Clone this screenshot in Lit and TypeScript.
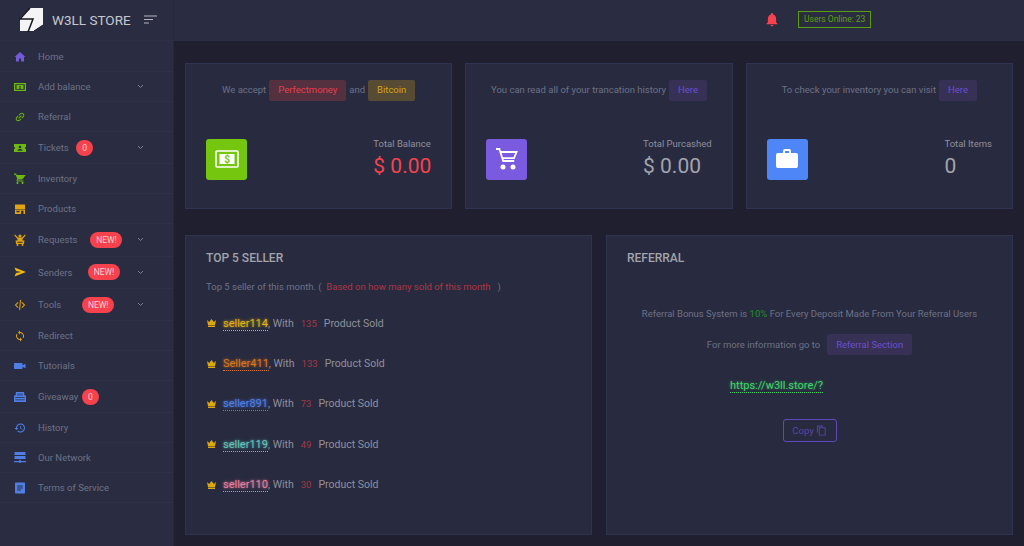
import { LitElement, html, css, svg } from 'lit';
import { customElement } from 'lit/decorators.js';

const GREEN = '#6cb80f';
const ORANGE = '#e0a40e';
const BLUE = '#4f7fe6';
const PURPLE = '#7459d9';

const ICONS: Record<string, any> = {
  home: svg`<path d="M10 21v-6h4v6h6v-9h3L12 2 1 12h3v9z"/>`,
  money: svg`<path fill-rule="evenodd" d="M0 4h24v16H0zM2.5 6.5v11h19v-11z"/><rect x="5" y="8" width="14" height="8"/><text x="12" y="15" font-size="8" font-weight="700" text-anchor="middle" fill="#2a2d41" font-family="Roboto">$</text>`,
  link: svg`<g transform="rotate(-45 12 12)"><path d="M3.9 12c0-1.71 1.39-3.1 3.1-3.1h4V7H7c-2.76 0-5 2.24-5 5s2.24 5 5 5h4v-1.9H7c-1.71 0-3.1-1.39-3.1-3.1zM8 13h8v-2H8v2zm9-6h-4v1.9h4c1.71 0 3.1 1.39 3.1 3.1s-1.39 3.1-3.1 3.1h-4V17h4c2.76 0 5-2.24 5-5s-2.24-5-5-5z"/></g>`,
  ticket: svg`<path d="M0 4h24v6a2 2 0 0 0 0 4v6H0v-6a2 2 0 0 0 0-4z"/><circle cx="12" cy="10" r="2.6" fill="#2a2d41"/><path d="M7 17.5c0-2.6 2.6-3.6 5-3.6s5 1 5 3.6z" fill="#2a2d41"/>`,
  cart: svg`<path d="M7 18c-1.1 0-1.99.9-1.99 2S5.9 22 7 22s2-.9 2-2-.9-2-2-2zM0 1v2.5h3l3.6 8.1-1.35 2.45c-.16.28-.25.61-.25.96 0 1.1.9 2 2 2h12v-2H7.42c-.14 0-.25-.11-.25-.25l.03-.12.9-1.83h7.45c.75 0 1.41-.41 1.75-1.03L23.5 4H5.21l-.94-3H0zm17 17c-1.1 0-1.99.9-1.99 2s.89 2 1.99 2 2-.9 2-2-.9-2-2-2z"/>`,
  store: svg`<path fill-rule="evenodd" d="M2 3h20v9H2zM2 13h20v9H2zM5 15.5v3h6v-3zM14 15.5v6.5h5v-6.5z"/>`,
  request: svg`<circle cx="12" cy="4" r="3"/><path d="M2 1l6 6h8l6-6 1.6 1.6L17 10v3H7v-3L.4 2.6zM3 13h18l-1.2 7H4.200zM6.500 15.500l.4 2h10.200l.4-2z" fill-rule="evenodd"/><circle cx="7" cy="22" r="2"/><circle cx="17" cy="22" r="2"/>`,
  send: svg`<path d="M1 3l23 9-23 9 3-7 10-2-10-2z"/>`,
  code: svg`<path d="M7.500 18L1.500 12l6-6 1.500 1.500L4.500 12 9 16.500zM16.500 18l6-6-6-6L15 7.500l4.500 4.500L15 16.500zM10.200 22l2 .4L14 2l-2-.4z"/>`,
  sync: svg`<path d="M12 4V1L8 5l4 4V6c3.31 0 6 2.69 6 6 0 1.01-.25 1.970-.7 2.8l1.460 1.460C19.540 15.030 20 13.570 20 12c0-4.420-3.580-8-8-8zm0 14c-3.310 0-6-2.690-6-6 0-1.010.25-1.970.7-2.8L5.240 7.740C4.460 8.970 4 10.430 4 12c0 4.420 3.580 8 8 8v3l4-4-4-4v3z"/>`,
  video: svg`<path d="M17 10.500V7c0-.55-.45-1-1-1H1c-.55 0-1 .45-1 1v10c0 .55.45 1 1 1h15c.55 0 1-.45 1-1v-3.500l6 3v-9z"/>`,
  gift: svg`<path fill-rule="evenodd" d="M4 2h16l1 7h3v13H0V9h3zM7 5v4h2V5zM11 5v4h2V5zM15 5v4h2V5zM2.500 12.500v1.500h19v-1.500zM2.500 17v1.500h19V17z"/>`,
  history: svg`<path d="M13 3c-4.970 0-9 4.030-9 9H1l3.890 3.890.07.14L9 12H6c0-3.870 3.130-7 7-7s7 3.130 7 7-3.130 7-7 7c-1.930 0-3.680-.79-4.940-2.060l-1.420 1.420C8.270 19.990 10.510 21 13 21c4.970 0 9-4.030 9-9s-4.030-9-9-9zm-1 5v5l4.280 2.540.72-1.210-3.500-2.080V8H12z"/>`,
  network: svg`<path fill-rule="evenodd" d="M1 0h22v6H1zM1 8h22v6H1zM10.500 15.500h3V18H24v2.500H14a2.200 2.200 0 0 1-4 0H0V18h10.500z"/>`,
  terms: svg`<path d="M20 1H4C2.900 1 2 1.900 2 3v18c0 1.100.9 2 2 2h16c1.100 0 2-.9 2-2V3c0-1.100-.9-2-2-2zm-6 16H6.500v-2H14v2zm3.500-4h-11v-2h11v2zm0-4h-11V7h11v2z"/>`,
};

const NAV = [
  { label: 'Home', icon: 'home', color: PURPLE },
  { label: 'Add balance', icon: 'money', color: GREEN, caret: true },
  { label: 'Referral', icon: 'link', color: GREEN },
  { label: 'Tickets', icon: 'ticket', color: GREEN, badge: '0', gap: 7.5, caret: true },
  { label: 'Inventory', icon: 'cart', color: GREEN },
  { label: 'Products', icon: 'store', color: ORANGE },
  { label: 'Requests', icon: 'request', color: ORANGE, badge: 'NEW!', gap: 13, caret: true },
  { label: 'Senders', icon: 'send', color: '#f0b90b', badge: 'NEW!', gap: 15.5, caret: true },
  { label: 'Tools', icon: 'code', color: ORANGE, badge: 'NEW!', gap: 21, caret: true },
  { label: 'Redirect', icon: 'sync', color: ORANGE },
  { label: 'Tutorials', icon: 'video', color: BLUE },
  { label: 'Giveaway', icon: 'gift', color: BLUE, badge: '0', gap: 3.5 },
  { label: 'History', icon: 'history', color: BLUE },
  { label: 'Our Network', icon: 'network', color: BLUE },
  { label: 'Terms of Service', icon: 'terms', color: BLUE },
];

const SELLERS = [
  { name: 'seller114', color: '#e0b015', sold: 135 },
  { name: 'Seller411', color: '#d9761c', sold: 133 },
  { name: 'seller891', color: '#4f7fe6', sold: 73 },
  { name: 'seller119', color: '#66c2b8', sold: 49 },
  { name: 'seller110', color: '#e87f9c', sold: 30 },
];

@customElement('app-root')
export class AppRoot extends LitElement {
  static styles = css`
    :host {
      display: grid;
      grid-template-columns: 174px 1fr;
      grid-template-rows: 41px 1fr;
      height: 100vh;
      overflow: hidden;
      background: #1f1f2f;
      color: #6d7186;
      font-family: Roboto, "Liberation Sans", sans-serif;
      font-size: 9.5px;
    }

    svg { display: block; fill: currentColor; }

    .brand {
      display: flex;
      align-items: center;
      background: #2a2d41;
      padding-left: 19px;
      border-right: 1px solid #26283a;
      border-bottom: 1px solid #2b2e45;
    }
    .brand .title {
      margin-left: 8px;
      color: #c6c8d0;
      font-size: 13.5px;
      white-space: nowrap;
    }
    .brand .toggle { margin-left: 13px; color: #b4b6c0; }

    .topbar {
      display: flex;
      align-items: center;
      background: #2a2d41;
      padding: 0 0 3px 591px;
    }
    .topbar .bell { color: #f5424c; }
    .online {
      margin-left: 19px;
      border: 1px solid #5a9e10;
      color: #5f9e12;
      font-size: 8.5px;
      line-height: 15px;
      padding: 0 5px;
      white-space: nowrap;
    }

    .sidebar {
      background: #2a2d41;
      border-right: 1px solid #26283a;
      padding-top: 1px;
    }
    .nav-row {
      display: flex;
      align-items: center;
      height: 30px;
      box-sizing: border-box;
      padding: 0 29px 0 14px;
      border-bottom: 1px solid #2e3048;
      font-size: 9.5px;
      color: #6d7186;
      white-space: nowrap;
    }
    .nav-row.tall { height: 32.3px; }
    .nav-row .nav-icon { width: 12px; height: 12px; margin-right: 12px; flex: none; }
    .caret { margin-left: auto; color: #7c8093; }
    .badge {
      background: #f5424c;
      color: #f6d5d8;
      font-size: 8.5px;
      line-height: 16px;
      height: 16px;
      border-radius: 8px;
      padding: 0 6px;
      text-align: center;
    }
    .badge.round { width: 17px; padding: 0; }
    .badge.wide { width: 32px; padding: 0; }

    main {
      padding: 22px 11px 0;
      min-width: 0;
    }
    .stats {
      display: grid;
      grid-template-columns: repeat(3, 1fr);
      gap: 13px;
    }
    .card {
      background: #282b3f;
      border: 1px solid #2f3350;
      box-sizing: border-box;
    }
    .stat {
      height: 146px;
      padding: 16px 20px 0;
    }
    .stat .note {
      display: flex;
      justify-content: center;
      align-items: flex-start;
      gap: 3px;
      height: 21px;
      line-height: 19px;
      white-space: nowrap;
    }
    .pill {
      display: inline-block;
      border-radius: 2px;
      line-height: 19px;
      padding: 0 9px 2px;
    }
    .pill.red { background: #55303f; color: #e2404d; }
    .pill.yellow { background: #574b33; color: #d5a415; }
    .pill.violet { background: #373156; color: #6a4fd0; }
    .stat .body {
      display: flex;
      justify-content: space-between;
      align-items: center;
      margin-top: 37px;
    }
    .tile {
      width: 41px;
      height: 41px;
      border-radius: 3px;
      display: flex;
      align-items: center;
      justify-content: center;
      color: #fff;
    }
    .tile.green { background: #74c60e; }
    .tile.purple { background: #7a5bdf; }
    .tile.blue { background: #4f86f7; }
    .stat .figures { padding-bottom: 2px; }
    .stat .caption { font-size: 9.5px; color: #8d8f9d; }
    .stat .value {
      font-size: 21px;
      line-height: 24px;
      margin-top: 5px;
      color: #a3a4ac;
    }
    .stat .value.red { color: #f5424c; }

    .panels {
      display: grid;
      grid-template-columns: repeat(2, 1fr);
      gap: 14px;
      margin-top: 26px;
    }
    .panel {
      height: 300px;
      padding: 15px 20px;
    }
    h3 {
      margin: 0;
      font-size: 12px;
      line-height: 14px;
      font-weight: 500;
      color: #a2a3ab;
    }
    .sub { margin-top: 15px; line-height: 14px; white-space: pre; }
    .sub .alert { color: #b03543; }
    .sellers { margin-top: 9px; }
    .seller {
      display: flex;
      align-items: center;
      height: 40.4px;
      font-size: 10.5px;
      color: #8f909c;
    }
    .seller .crown { color: #dba90f; margin: 0 7px 0 1px; flex: none; }
    .seller .text { white-space: pre; }
    .seller .name {
      font-size: 11px;
      border-bottom: 1px dotted currentColor;
    }
    .seller .sold { color: #a23845; font-size: 9.5px; margin: 0 7px; }

    .referral { text-align: center; }
    .referral h3 { text-align: left; }
    .referral .line { margin-top: 42px; line-height: 14px; }
    .referral .line b { color: #1f7f2a; font-weight: 500; }
    .more {
      display: flex;
      justify-content: center;
      align-items: center;
      gap: 7px;
      margin-top: 13px;
    }
    .more .pill { line-height: 21px; padding: 0 9px; }
    .url {
      display: inline-block;
      margin-top: 25px;
      padding-right: 66px;
      color: #3fd468;
      font-size: 11px;
      line-height: 12px;
      text-shadow: 0 0 3px rgba(63, 212, 104, 0.6);
    }
    .url span { border-bottom: 1px dotted currentColor; }
    .copy-wrap { margin-top: 27px; }
    .copy {
      display: inline-flex;
      align-items: center;
      justify-content: center;
      gap: 2px;
      box-sizing: border-box;
      height: 23px;
      width: 54px;
      border: 1px solid #5f49b8;
      border-radius: 3px;
      color: #5a45a8;
      background: none;
      font: inherit;
    }
  `;

  navRow(item: any) {
    const badgeClass = item.badge === '0' ? 'round' : 'wide';
    return html`
      <div class="nav-row ${item.badge ? 'tall' : ''}">
        <svg class="nav-icon" viewBox="0 0 24 24" style="color: ${item.color}">${ICONS[item.icon]}</svg>
        <span>${item.label}</span>
        ${item.badge
          ? html`<span class="badge ${badgeClass}" style="margin-left: ${item.gap}px">${item.badge}</span>`
          : ''}
        ${item.caret
          ? html`<svg class="caret" width="7" height="5" viewBox="0 0 7 5"><path d="M1 1l2.500 2.500L6 1" fill="none" stroke="currentColor"/></svg>`
          : ''}
      </div>
    `;
  }

  statCard(note: any, tile: string, icon: any, caption: string, value: string, valueClass = '') {
    return html`
      <section class="card stat">
        <div class="note">${note}</div>
        <div class="body">
          <div class="tile ${tile}">${icon}</div>
          <div class="figures">
            <div class="caption">${caption}</div>
            <div class="value ${valueClass}">${value}</div>
          </div>
        </div>
      </section>
    `;
  }

  render() {
    const moneyIcon = html`<svg width="24" height="20" viewBox="0 0 24 20" style="fill:none;stroke:#fff;stroke-width:1.6"><rect x="1" y="2" width="22" height="16" rx="1"/><rect x="4.500" y="5" width="15" height="10" fill="#fff" stroke="none"/><text x="12" y="14" font-size="10" font-weight="700" text-anchor="middle" fill="#74c60e" stroke="none" font-family="Roboto">$</text></svg>`;
    const cartIcon = html`<svg width="24" height="24" viewBox="0 0 24 24" style="fill:none;stroke:#fff;stroke-width:1.8"><path d="M1 2h3.400l3.800 12h11"/><path d="M5.200 5h16.400l-2.600 6.200H7.200"/><circle cx="8" cy="20" r="1.600" fill="#fff"/><circle cx="18" cy="20" r="1.600" fill="#fff"/></svg>`;
    const bagIcon = html`<svg width="24" height="22" viewBox="0 0 24 22"><path fill-rule="evenodd" d="M8 5V3a2 2 0 0 1 2-2h4a2 2 0 0 1 2 2v2h5a2 2 0 0 1 2 2v11a2 2 0 0 1-2 2H3a2 2 0 0 1-2-2V7a2 2 0 0 1 2-2zM10 3v2h4V3z"/></svg>`;

    return html`
      <header class="brand">
        <svg width="25" height="27" viewBox="0 0 25 27">
          <rect x="1" y="1" width="23" height="23" fill="#f4f4f4"/>
          <path d="M1 1h10L1 11z" fill="#2a2d41"/>
          <path d="M11 1L1 12h13L9 25" fill="none" stroke="#16161f" stroke-width="1.500"/>
          <path d="M15 24l9-6v6z" fill="#2a2d41"/>
          <path d="M15 24l9-6" fill="none" stroke="#16161f" stroke-width="1"/>
        </svg>
        <span class="title">W3LL STORE</span>
        <svg class="toggle" width="13" height="10" viewBox="0 0 13 10"><path d="M0 1h13M0 4.500h9M0 8h5" fill="none" stroke="currentColor" stroke-width="1.200"/></svg>
      </header>
      <div class="topbar">
        <svg class="bell" width="14" height="15" viewBox="2 1 20 22"><path d="M12 22c1.100 0 2-.9 2-2h-4c0 1.100.89 2 2 2zm6-6v-5c0-3.070-1.640-5.640-4.500-6.320V4c0-.83-.67-1.500-1.500-1.500s-1.500.67-1.500 1.500v.68C7.630 5.360 6 7.920 6 11v5l-2 2v1h16v-1l-2-2z"/></svg>
        <div class="online">Users Online: 23</div>
      </div>
      <nav class="sidebar">${NAV.map(item => this.navRow(item))}</nav>
      <main>
        <div class="stats">
          ${this.statCard(
            html`We accept<span class="pill red">Perfectmoney</span>and<span class="pill yellow">Bitcoin</span>`,
            'green', moneyIcon, 'Total Balance', '$ 0.00', 'red')}
          ${this.statCard(
            html`You can read all of your trancation history<span class="pill violet">Here</span>`,
            'purple', cartIcon, 'Total Purcashed', '$ 0.00')}
          ${this.statCard(
            html`To check your inventory you can visit<span class="pill violet">Here</span>`,
            'blue', bagIcon, 'Total Items', '0')}
        </div>
        <div class="panels">
          <section class="card panel">
            <h3>TOP 5 SELLER</h3>
            <div class="sub">Top 5 seller of this month. (  <span class="alert">Based on how many sold of this month</span>   )</div>
            <div class="sellers">
              ${SELLERS.map(s => html`
                <div class="seller">
                  <svg class="crown" width="9" height="8" viewBox="0 0 9 8"><path d="M0 1l2.200 2L4.500 0l2.300 3L9 1 8 6H1zM1 6.600h7V8H1z"/></svg>
                  <span class="text"><span class="name" style="color: ${s.color}; text-shadow: 0 0 3px ${s.color}">${s.name}</span>, With<span class="sold">${s.sold}</span>Product Sold</span>
                </div>
              `)}
            </div>
          </section>
          <section class="card panel referral">
            <h3>REFERRAL</h3>
            <div class="line">Referral Bonus System is <b>10%</b> For Every Deposit Made From Your Referral Users</div>
            <div class="more">For more information go to <span class="pill violet">Referral Section</span></div>
            <div><span class="url"><span>https://w3ll.store/?</span></span></div>
            <div class="copy-wrap">
              <button class="copy">Copy
                <svg width="11" height="11" viewBox="0 0 24 24"><path d="M16 1H4c-1.100 0-2 .9-2 2v14h2V3h12V1zm3 4H8c-1.100 0-2 .9-2 2v14c0 1.100.9 2 2 2h11c1.100 0 2-.9 2-2V7c0-1.100-.9-2-2-2zm0 16H8V7h11v14z"/></svg>
              </button>
            </div>
          </section>
        </div>
      </main>
    `;
  }
}
